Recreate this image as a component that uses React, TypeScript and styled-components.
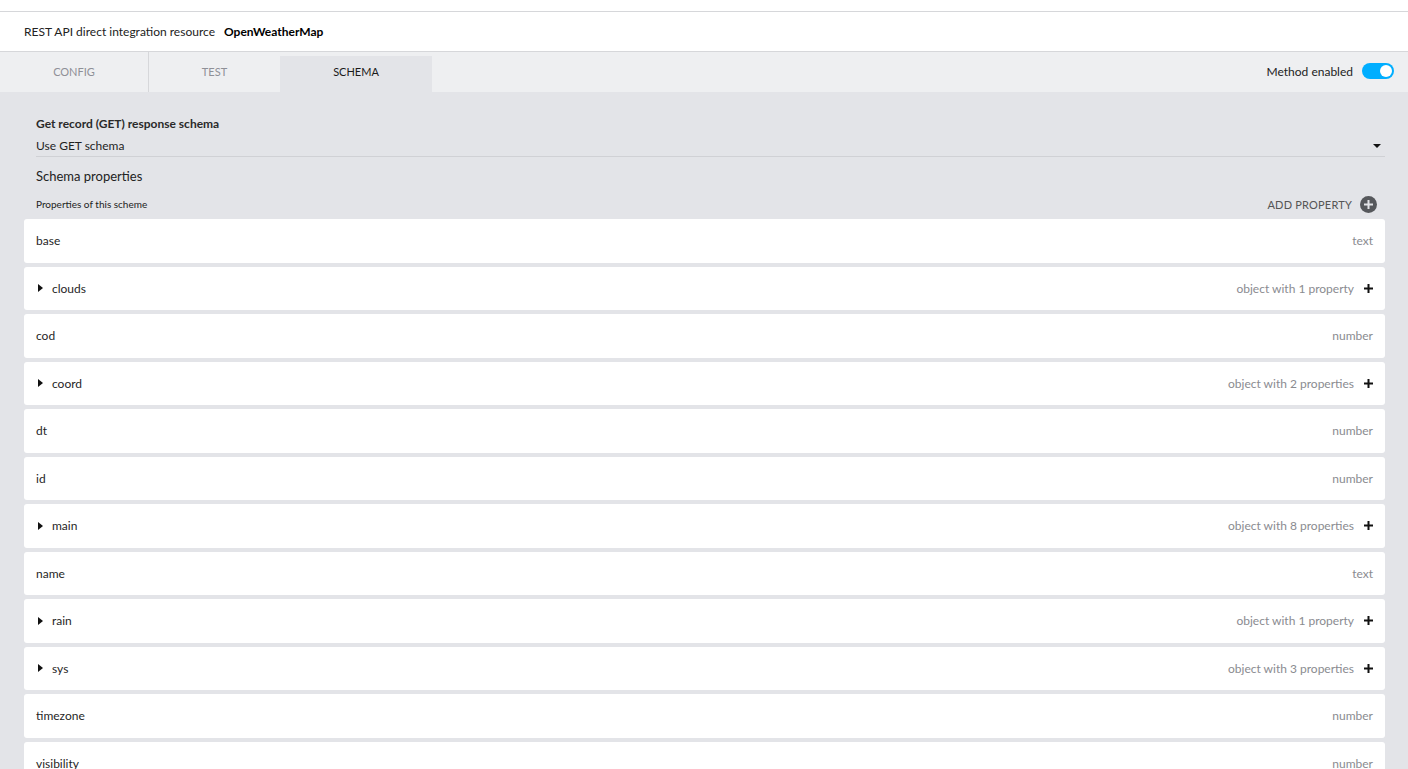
import React from "react";
import styled, { createGlobalStyle } from "styled-components";

const GlobalStyle = createGlobalStyle`
  html, body {
    margin: 0;
    padding: 0;
    background: #e3e4e8;
    font-family: Lato, "Open Sans", "Liberation Sans", sans-serif;
    color: #1f1f1f;
    overflow: hidden;
  }
`;

interface Property {
  name: string;
  type: string;
  expandable?: boolean;
}

const properties: Property[] = [
  { name: "base", type: "text" },
  { name: "clouds", type: "object with 1 property", expandable: true },
  { name: "cod", type: "number" },
  { name: "coord", type: "object with 2 properties", expandable: true },
  { name: "dt", type: "number" },
  { name: "id", type: "number" },
  { name: "main", type: "object with 8 properties", expandable: true },
  { name: "name", type: "text" },
  { name: "rain", type: "object with 1 property", expandable: true },
  { name: "sys", type: "object with 3 properties", expandable: true },
  { name: "timezone", type: "number" },
  { name: "visibility", type: "number" },
];

const tabs = ["CONFIG", "TEST", "SCHEMA"];

const PlusIcon = () => (
  <svg width="9" height="9" viewBox="0 0 9 9">
    <path d="M3.5 0h2v3.5H9v2H5.5V9h-2V5.5H0v-2h3.5z" fill="#111" />
  </svg>
);

const CircledPlus = () => (
  <svg width="17" height="17" viewBox="0 0 17 17">
    <circle cx="8.5" cy="8.5" r="8.5" fill="#56585c" />
    <path d="M7.5 4h2v3.5H13v2H9.5V13h-2V9.5H4v-2h3.5z" fill="#e3e4e8" />
  </svg>
);

const Caret = () => (
  <svg width="5" height="8" viewBox="0 0 5 8">
    <path d="M0 0l5 4-5 4z" fill="#111" />
  </svg>
);

export default function App() {
  return (
    <Page>
      <GlobalStyle />
      <TopStrip />
      <Header>
        <HeaderLabel>REST API direct integration resource</HeaderLabel>
        <HeaderName>OpenWeatherMap</HeaderName>
      </Header>
      <TabBar>
        {tabs.map((t, i) => (
          <Tab key={t} active={t === "SCHEMA"} divider={i === 0}>
            {t}
          </Tab>
        ))}
        <Spacer />
        <ToggleLabel>Method enabled</ToggleLabel>
        <Toggle>
          <Knob />
        </Toggle>
      </TabBar>
      <Content>
        <Section>
          <FieldLabel>Get record (GET) response schema</FieldLabel>
          <Select>
            <span>Use GET schema</span>
            <DropArrow />
          </Select>
          <SubTitle>Schema properties</SubTitle>
          <ListHead>
            <SmallText>Properties of this scheme</SmallText>
            <AddButton>
              ADD PROPERTY
              <CircledPlus />
            </AddButton>
          </ListHead>
        </Section>
        <List>
          {properties.map((p) => (
            <Row key={p.name}>
              {p.expandable && (
                <CaretBox>
                  <Caret />
                </CaretBox>
              )}
              <RowName>{p.name}</RowName>
              <RowType>{p.type}</RowType>
              {p.expandable && (
                <PlusBox>
                  <PlusIcon />
                </PlusBox>
              )}
            </Row>
          ))}
        </List>
      </Content>
    </Page>
  );
}

const Page = styled.div`
  width: 1408px;
  height: 769px;
  overflow: hidden;
  background: #e3e4e8;
`;

const TopStrip = styled.div`
  height: 11px;
  background: #fff;
  border-bottom: 1px solid #d6d7da;
`;

const Header = styled.div`
  height: 39px;
  background: #fff;
  border-bottom: 1px solid #d6d7da;
  display: flex;
  align-items: center;
  padding-left: 24px;
  gap: 9px;
  font-size: 12px;
`;

const HeaderLabel = styled.span`
  color: #222;
`;

const HeaderName = styled.span`
  font-weight: 700;
  color: #000;
`;

const TabBar = styled.div`
  height: 40px;
  background: #eeeff1;
  display: flex;
  align-items: stretch;
  padding-right: 14px;
`;

const Tab = styled.div<{ active?: boolean; divider?: boolean }>`
  width: ${(p) => (p.divider ? "148px" : p.active ? "152px" : "131px")};
  margin-top: ${(p) => (p.active ? "4px" : "0")};
  display: flex;
  align-items: center;
  justify-content: center;
  padding-bottom: ${(p) => (p.active ? "6px" : "2px")};
  font-size: 11px;
  color: ${(p) => (p.active ? "#1a1a1a" : "#8e9097")};
  background: ${(p) => (p.active ? "#e3e4e8" : "transparent")};
  border-right: ${(p) => (p.divider ? "1px solid #d6d7da" : "none")};
`;

const Spacer = styled.div`
  flex: 1;
`;

const ToggleLabel = styled.span`
  align-self: center;
  font-size: 12px;
  color: #222;
  margin-right: 9px;
  margin-bottom: 2px;
`;

const Toggle = styled.div`
  align-self: center;
  width: 32px;
  height: 16px;
  border-radius: 8px;
  background: #00aeff;
  display: flex;
  align-items: center;
  justify-content: flex-end;
  padding: 0 2px;
  box-sizing: border-box;
  margin-bottom: 2px;
`;

const Knob = styled.div`
  width: 12px;
  height: 12px;
  border-radius: 50%;
  background: #fff;
`;

const Content = styled.div`
  padding: 24px 23px 0 24px;
`;

const Section = styled.div`
  padding: 0 0 0 12px;
`;

const FieldLabel = styled.div`
  font-size: 12px;
  font-weight: 700;
  color: #2a2a2a;
  line-height: 16px;
`;

const Select = styled.div`
  display: flex;
  align-items: center;
  justify-content: space-between;
  height: 25px;
  font-size: 12px;
  color: #1f1f1f;
  border-bottom: 1px solid #d0d1d5;
  box-sizing: border-box;
  padding-top: 3px;
`;

const DropArrow = styled.div`
  width: 0;
  height: 0;
  border-left: 4px solid transparent;
  border-right: 4px solid transparent;
  border-top: 4px solid #111;
  margin-right: 4px;
`;

const SubTitle = styled.div`
  font-size: 13px;
  margin-top: 11px;
  line-height: 16px;
  color: #222;
`;

const ListHead = styled.div`
  display: flex;
  align-items: center;
  justify-content: space-between;
  height: 20px;
  margin-top: 10px;
  margin-bottom: 5px;
  padding-right: 8px;
`;

const SmallText = styled.span`
  font-size: 10px;
  color: #222;
`;

const AddButton = styled.span`
  display: flex;
  align-items: center;
  gap: 8px;
  font-size: 11px;
  color: #555;
  letter-spacing: 0.2px;
`;

const List = styled.div`
  display: flex;
  flex-direction: column;
  gap: 4px;
`;

const Row = styled.div`
  height: 43.5px;
  background: #fff;
  border-radius: 3px;
  display: flex;
  align-items: center;
  padding: 0 12px 0 12px;
  font-size: 12px;
`;

const CaretBox = styled.span`
  display: flex;
  width: 16px;
  padding-left: 2px;
  box-sizing: border-box;
`;

const RowName = styled.span`
  flex: 1;
  color: #1f1f1f;
`;

const RowType = styled.span`
  color: #8a8b90;
`;

const PlusBox = styled.span`
  display: flex;
  margin-left: 10px;
`;
